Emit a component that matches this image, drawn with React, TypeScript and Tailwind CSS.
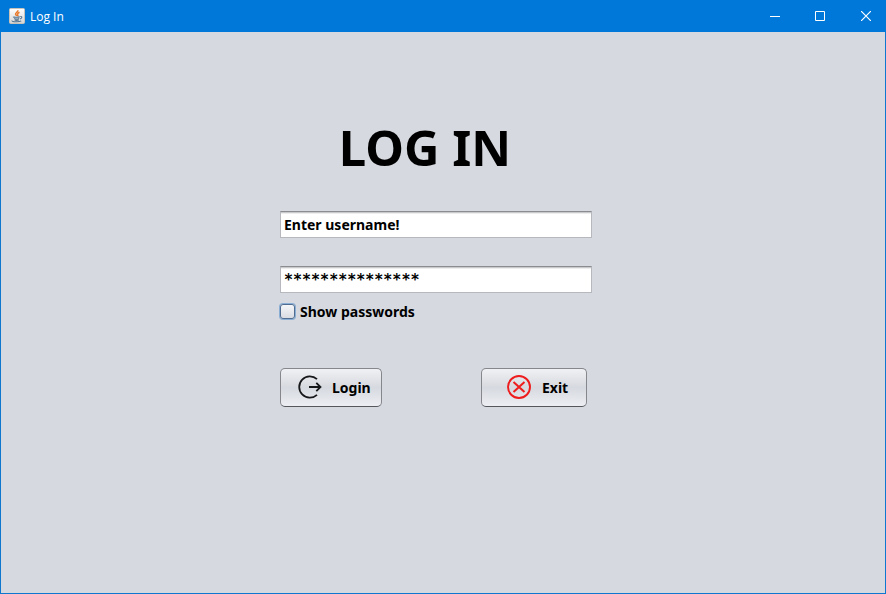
import { useState } from "react";

function JavaIcon() {
  return (
    <svg viewBox="0 0 16 16" className="size-4" aria-hidden="true">
      <defs>
        <linearGradient id="tile" x1="0" y1="0" x2="0" y2="1">
          <stop offset="0" stopColor="#ffffff" />
          <stop offset="1" stopColor="#d5d5d5" />
        </linearGradient>
      </defs>
      <rect x="0.5" y="0.5" width="15" height="15" rx="1" fill="url(#tile)" stroke="#c9c2b8" />
      <path d="M8.800 2.200c.6 1.700-2.600 2.300-2.200 4 .2.700.9 1 1 1.800M10.500 4.300c-1.200.5-2.200 1.200-1.900 2.200.2.600.7.900.1 1.700" fill="none" stroke="#e8792a" strokeWidth="1.500" />
      <path d="M4.500 8.800c-1 .6 5 .7 6.300 0M5.200 10.500c1.200.6 3.800.6 5 0M5.600 12c1.200.5 3 .5 4.200 0M3.200 12.700c-1 1.200 7.600 1.500 9 .2M11.300 8.500c2-.4 2.200 1.800-.3 2.500" fill="none" stroke="#53738f" strokeWidth="1.100" />
    </svg>
  );
}

function LoginIcon() {
  return (
    <svg viewBox="0 0 24 24" className="size-6" fill="none" stroke="#17181a" strokeWidth="1.800" aria-hidden="true">
      <path d="M19 4.200A10.600 10.600 0 1 0 19 19.800" />
      <path d="M11 12H22.500M18.300 7.800L22.500 12L18.300 16.200" />
    </svg>
  );
}

function ExitIcon() {
  return (
    <svg viewBox="0 0 24 24" className="size-6" fill="none" stroke="#ee1c1c" aria-hidden="true">
      <circle cx="12" cy="12" r="11" strokeWidth="1.900" />
      <path d="M6.500 7L17.500 17M17.500 7L6.500 17" strokeWidth="2" />
    </svg>
  );
}

const field =
  "block h-[27px] w-full border border-[#b6b8bd] border-t-[#8b8c90] bg-white px-[3px] shadow-[inset_0_1px_0_#c9cacd,inset_0_2px_0_#eeeeef] outline-none";
const button =
  "flex h-[39px] items-center rounded-[5px] border border-[#85878d] border-b-[#55575c] bg-linear-to-b from-[#f0f1f4] via-[#d6d9df] to-[#eceef3] pb-px text-sm";
const buttonLabel = "pt-px";
const caption = "flex h-8 items-center justify-center";

export default function App() {
  const [user, setUser] = useState("Enter username!");
  const [password, setPassword] = useState("***************");
  return (
    <div className="flex min-h-screen flex-col border border-t-0 border-[#1077cf] bg-[#d6d9e0] font-['Noto_Sans',sans-serif] font-bold text-black">
      <header className="-mx-px flex h-8 items-center bg-[#0078d9] pl-[9px] font-normal text-white">
        <JavaIcon />
        <span className="ml-[5px] flex-1 pt-px font-['Open_Sans',sans-serif] text-xs">Log In</span>
        <button aria-label="Minimize" className={`w-[45px] ${caption}`}>
          <svg className="size-[10px]" viewBox="0 0 10 10" stroke="white"><path d="M0 5.500H10" /></svg>
        </button>
        <button aria-label="Maximize" className={`w-[45px] ${caption}`}>
          <svg className="size-[10px]" viewBox="0 0 10 10" fill="none" stroke="white"><path d="M.5.500H9.500V9.500H.5Z" /></svg>
        </button>
        <button aria-label="Close" className={`w-11 pl-1 ${caption}`}>
          <svg className="size-[10px]" viewBox="0 0 10 10" stroke="white" strokeWidth="1.200"><path d="M0 0L10 10M10 0L0 10" /></svg>
        </button>
      </header>
      <main className="flex flex-1 justify-center pt-[82px] pr-[14px]">
        <form className="w-[312px]" onSubmit={(e) => e.preventDefault()}>
          <h1 className="pr-[22px] text-center text-[49px] leading-[67px]">LOG IN</h1>
          <input aria-label="Username" className={`mt-[30px] text-sm ${field}`} value={user} onChange={(e) => setUser(e.target.value)} />
          <input aria-label="Password" className={`mt-7 font-['DejaVu_Sans_Mono',monospace] text-[15px] ${field}`} value={password} onChange={(e) => setPassword(e.target.value)} />
          <div className="mt-2 flex items-center gap-[5px]">
            <input id="show" type="checkbox" className="size-[15px] appearance-none rounded-[3px] border border-[#506d91] bg-linear-to-b from-[#f5f6f8] to-[#d9dce2] shadow-[0_0_0_1px_#8aaed3]" />
            <label htmlFor="show" className="pt-px text-sm">Show passwords</label>
          </div>
          <div className="mt-[46px] flex justify-between pr-[5px]">
            <button type="submit" className={`w-[102px] gap-[10px] pl-[17px] ${button}`}><LoginIcon /><span className={buttonLabel}>Login</span></button>
            <button type="button" className={`w-[106px] gap-[11px] pl-[25px] ${button}`}><ExitIcon /><span className={buttonLabel}>Exit</span></button>
          </div>
        </form>
      </main>
    </div>
  );
}
